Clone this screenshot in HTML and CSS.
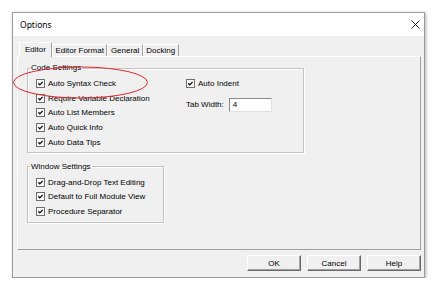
FILE: index.html
```html
<!DOCTYPE html>
<html lang="en">
<head>
    <meta charset="UTF-8">
    <meta name="viewport" content="width=device-width, initial-scale=1.0">
    <title>Options</title>
    <link rel="stylesheet" href="styles.css">
</head>
<body>

    <div class="window">
        <div class="titlebar">
            <span class="title">Options</span>
            <svg class="close" width="9" height="9" viewBox="0 0 9 9">
                <path d="M0.5 0.5 L8.5 8.5 M8.5 0.5 L0.5 8.5"/>
            </svg>
        </div>

        <div class="client">
            <div class="tabs">
                <span class="tab active">Editor</span>
                <span class="tab">Editor Format</span>
                <span class="tab">General</span>
                <span class="tab">Docking</span>
            </div>

            <div class="panel">
                <fieldset class="group code-group">
                    <legend>Code Settings</legend>
                    <div class="group-body code-body">
                        <div class="col">
                            <div class="check"><span class="box"><svg viewBox="0 0 9 9"><path d="M1.8 4.2 L3.6 6.2 L7.2 2.4"/></svg></span>Auto Syntax Check</div>
                            <div class="check"><span class="box"><svg viewBox="0 0 9 9"><path d="M1.8 4.2 L3.6 6.2 L7.2 2.4"/></svg></span>Require Variable Declaration</div>
                            <div class="check"><span class="box"><svg viewBox="0 0 9 9"><path d="M1.8 4.2 L3.6 6.2 L7.2 2.4"/></svg></span>Auto List Members</div>
                            <div class="check"><span class="box"><svg viewBox="0 0 9 9"><path d="M1.8 4.2 L3.6 6.2 L7.2 2.4"/></svg></span>Auto Quick Info</div>
                            <div class="check"><span class="box"><svg viewBox="0 0 9 9"><path d="M1.8 4.2 L3.6 6.2 L7.2 2.4"/></svg></span>Auto Data Tips</div>
                        </div>
                        <div class="col">
                            <div class="check"><span class="box"><svg viewBox="0 0 9 9"><path d="M1.8 4.2 L3.6 6.2 L7.2 2.4"/></svg></span>Auto Indent</div>
                            <div class="field">
                                <label for="tabWidth">Tab Width:</label>
                                <span class="input" id="tabWidth">4</span>
                            </div>
                        </div>
                    </div>
                </fieldset>

                <fieldset class="group window-group">
                    <legend>Window Settings</legend>
                    <div class="group-body">
                        <div class="check"><span class="box"><svg viewBox="0 0 9 9"><path d="M1.8 4.2 L3.6 6.2 L7.2 2.4"/></svg></span>Drag-and-Drop Text Editing</div>
                        <div class="check"><span class="box"><svg viewBox="0 0 9 9"><path d="M1.8 4.2 L3.6 6.2 L7.2 2.4"/></svg></span>Default to Full Module View</div>
                        <div class="check"><span class="box"><svg viewBox="0 0 9 9"><path d="M1.8 4.2 L3.6 6.2 L7.2 2.4"/></svg></span>Procedure Separator</div>
                    </div>
                </fieldset>
            </div>

            <div class="buttons">
                <button>OK</button>
                <button>Cancel</button>
                <button>Help</button>
            </div>
        </div>
    </div>

    <!-- red annotation circle over the first option -->
    <svg class="mark" width="138" height="34" viewBox="0 0 138 34">
        <ellipse cx="68.5" cy="16.5" rx="67" ry="15.5"/>
    </svg>

</body>
</html>
```

FILE: styles.css
```css
body {
    margin: 0;
    padding: 12px 0 0 12px;
    background-color: #fff;
    font-family: "Liberation Sans", Arial, sans-serif;
    font-size: 8px;
    color: #000;
}
.window {
    width: 411px;
    border: 1px solid #9b9b9b;
    background-color: #f0f0f0;
    box-shadow: 1px 1px 3px rgba(0, 0, 0, 0.3);
}
.titlebar {
    height: 23px;
    background-color: #fff;
    display: flex;
    align-items: center;
    justify-content: space-between;
    padding: 0 4px 0 7px;
}
.title {
    font-family: "Noto Sans", sans-serif;
    font-size: 8.5px;
}
.close path {
    stroke: #222;
    stroke-width: 1;
    fill: none;
}
.client {
    padding: 6px 3px 6px 4px;
}

/* tab strip */
.tabs {
    display: flex;
    align-items: flex-end;
    height: 14px;
    padding-left: 2px;
    position: relative;
    z-index: 1;
}
.tab {
    box-sizing: border-box;
    height: 12px;
    line-height: 11px;
    padding: 0 2.5px;
    border: 1px solid;
    border-color: #fff #a0a0a0 transparent #fff;
    border-bottom: 0;
}
.tab.active {
    height: 15px;
    line-height: 13px;
    padding: 0 5px;
    margin-bottom: -1px;
    background-color: #f0f0f0;
}
.panel {
    box-sizing: border-box;
    height: 194px;
    border: 1px solid;
    border-color: #fff #a0a0a0 #a0a0a0 #fff;
    padding: 6px 0 0 9px;
}

/* group boxes */
.group {
    box-sizing: border-box;
    margin: 0;
    padding: 0;
    min-width: 0;
    border: 1px solid #c4c4c4;
    box-shadow: inset 1px 1px 0 #fff, 1px 1px 0 #fff;
}
.group legend {
    padding: 0 1px;
    margin-left: 2px;
    line-height: 10px;
}
.group-body {
    padding: 3px 0 2px 8px;
}
.code-group {
    width: 277px;
}
.code-body {
    display: grid;
    grid-template-columns: 150px auto;
}
.window-group {
    width: 137px;
    margin-top: 9px;
}
.window-group .group-body {
    padding-bottom: 3px;
}
.check {
    display: flex;
    align-items: center;
    gap: 3px;
    height: 14.75px;
    white-space: nowrap;
}
.box {
    box-sizing: border-box;
    width: 9px;
    height: 9px;
    background-color: #fff;
    border: 1px solid #6f6f6f;
    display: flex;
}
.box svg {
    width: 7px;
    height: 7px;
}
.box path {
    stroke: #000;
    stroke-width: 1.6;
    fill: none;
}
.field {
    display: flex;
    align-items: center;
    gap: 5px;
    margin-top: 7px;
}
.input {
    box-sizing: border-box;
    width: 43px;
    height: 14px;
    line-height: 12px;
    padding-left: 3px;
    background-color: #fff;
    border: 1px solid;
    border-color: #8a8a8a #e0e0e0 #e0e0e0 #8a8a8a;
}

/* dialog buttons */
.buttons {
    display: flex;
    justify-content: flex-end;
    gap: 6px;
    margin-top: 5px;
}
button {
    box-sizing: border-box;
    width: 54px;
    height: 16px;
    padding: 0;
    font-family: "Liberation Sans", Arial, sans-serif;
    font-size: 8px;
    color: #000;
    background-color: #f0f0f0;
    border: 1px solid;
    border-color: #fff #6a6a6a #6a6a6a #fff;
    box-shadow: inset -1px -1px 0 #a0a0a0;
}

/* annotation */
.mark {
    position: absolute;
    left: 12px;
    top: 66px;
}
.mark ellipse {
    fill: none;
    stroke: #e3262a;
    stroke-width: 1;
}
```
